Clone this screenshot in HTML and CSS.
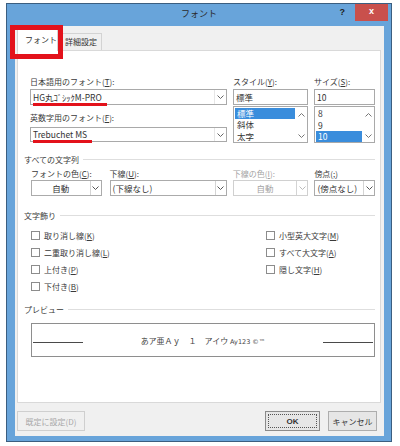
FILE: index.html
```html
<!DOCTYPE html>
<html lang="ja">
<head>
<meta charset="utf-8">
<title>フォント</title>
<link rel="stylesheet" href="styles.css">
</head>
<body>
<div class="window">
  <div class="titlebar">
    <span class="title">フォント</span>
    <div class="controls">
      <span class="help">?</span>
      <span class="close">x</span>
    </div>
  </div>
  <div class="content">
    <div class="tabs">
      <div class="tab active">フォント</div>
      <div class="tab">詳細設定</div>
      <div class="highlight"></div>
    </div>
    <div class="panel">
      <div class="top">
        <div class="col-font">
          <div class="label">日本語用のフォント(<u>T</u>):</div>
          <div class="input tall"><span class="val"><span class="mark">HG丸ｺﾞｼｯｸM-PRO</span></span><span class="drop"><svg width="7" height="4" viewBox="0 0 7 4"><path d="M.5.5 3.5 3.5 6.5.5" fill="none" stroke="#666"/></svg></span></div>
          <div class="label second">英数字用のフォント(<u>F</u>):</div>
          <div class="input short"><span class="val"><span class="mark">Trebuchet MS</span></span><span class="drop"><svg width="7" height="4" viewBox="0 0 7 4"><path d="M.5.5 3.5 3.5 6.5.5" fill="none" stroke="#666"/></svg></span></div>
        </div>
        <div class="col-style">
          <div class="label">スタイル(<u>Y</u>):</div>
          <div class="input tall"><span class="val">標準</span></div>
          <div class="list">
            <div class="items">
              <div class="item sel">標準</div>
              <div class="item">斜体</div>
              <div class="item">太字</div>
            </div>
            <div class="scroll">
              <svg width="7" height="4" viewBox="0 0 7 4"><path d="M.5 3.5 3.5.5 6.5 3.5" fill="none" stroke="#777"/></svg>
              <svg width="7" height="4" viewBox="0 0 7 4"><path d="M.5.5 3.5 3.5 6.5.5" fill="none" stroke="#777"/></svg>
            </div>
          </div>
        </div>
        <div class="col-size">
          <div class="label">サイズ(<u>S</u>):</div>
          <div class="input tall"><span class="val">10</span></div>
          <div class="list">
            <div class="items">
              <div class="item">8</div>
              <div class="item">9</div>
              <div class="item sel short-sel">10</div>
            </div>
            <div class="scroll">
              <svg width="7" height="4" viewBox="0 0 7 4"><path d="M.5 3.5 3.5.5 6.5 3.5" fill="none" stroke="#777"/></svg>
              <svg width="7" height="4" viewBox="0 0 7 4"><path d="M.5.5 3.5 3.5 6.5.5" fill="none" stroke="#777"/></svg>
            </div>
          </div>
        </div>
      </div>

      <div class="group-header first">すべての文字列</div>
      <div class="fields">
        <div class="field f-color">
          <div class="label">フォントの色(<u>C</u>):</div>
          <div class="combo"><span class="cval center">自動</span><span class="cbtn"><svg width="7" height="4" viewBox="0 0 7 4"><path d="M.5.5 3.5 3.5 6.5.5" fill="none" stroke="#555"/></svg></span></div>
        </div>
        <div class="field f-under">
          <div class="label">下線(<u>U</u>):</div>
          <div class="combo"><span class="cval">(下線なし)</span><span class="cbtn"><svg width="7" height="4" viewBox="0 0 7 4"><path d="M.5.5 3.5 3.5 6.5.5" fill="none" stroke="#555"/></svg></span></div>
        </div>
        <div class="field f-ucolor disabled">
          <div class="label">下線の色(<u>I</u>):</div>
          <div class="combo"><span class="cval center">自動</span><span class="cbtn"><svg width="7" height="4" viewBox="0 0 7 4"><path d="M.5.5 3.5 3.5 6.5.5" fill="none" stroke="#bbb"/></svg></span></div>
        </div>
        <div class="field f-emph">
          <div class="label">傍点(<u>;</u>)</div>
          <div class="combo"><span class="cval">(傍点なし)</span><span class="cbtn"><svg width="7" height="4" viewBox="0 0 7 4"><path d="M.5.5 3.5 3.5 6.5.5" fill="none" stroke="#555"/></svg></span></div>
        </div>
      </div>

      <div class="group-header deco">文字飾り</div>
      <div class="checks">
        <label class="check"><span class="box"></span>取り消し線(<u>K</u>)</label>
        <label class="check"><span class="box"></span>小型英大文字(<u>M</u>)</label>
        <label class="check"><span class="box"></span>二重取り消し線(<u>L</u>)</label>
        <label class="check"><span class="box"></span>すべて大文字(<u>A</u>)</label>
        <label class="check"><span class="box"></span>上付き(<u>P</u>)</label>
        <label class="check"><span class="box"></span>隠し文字(<u>H</u>)</label>
        <label class="check"><span class="box"></span>下付き(<u>B</u>)</label>
      </div>

      <div class="group-header prev">プレビュー</div>
      <div class="preview">
        <span class="pline"></span>
        <span class="ptext">あア亜Ａｙ　１　アイウ <span class="latin">Ay123 ©™</span></span>
        <span class="pline"></span>
      </div>
    </div>
    <div class="footer">
      <div class="btn disabled">既定に設定(D)</div>
      <div class="btn ok"><span class="focus">OK</span></div>
      <div class="btn cancel">キャンセル</div>
    </div>
  </div>
</div>
</body>
</html>
```

FILE: styles.css
```css
* { box-sizing: border-box; }
html, body { margin: 0; padding: 0; }
body {
  width: 400px;
  height: 446px;
  overflow: hidden;
  background: #fff;
  font-family: "Noto Sans CJK JP", "Liberation Sans", sans-serif;
  font-size: 8px;
  font-weight: 400;
  color: #3a3a3a;
}
u { text-decoration: underline; text-underline-offset: 1px; }

.window {
  margin: 3px 0 0 6px;
  width: 386px;
  height: 439px;
  border: 1px solid #3b5e80;
  background: #68a4da;
  display: flex;
  flex-direction: column;
}
.titlebar {
  flex: none;
  height: 22px;
  display: grid;
  grid-template-columns: 1fr auto 1fr;
}
.title {
  grid-column: 2;
  align-self: center;
  font-size: 9px;
  line-height: 11px;
  color: #2b2b2b;
  margin-bottom: 4px;
}
.controls {
  grid-column: 3;
  display: flex;
  justify-content: flex-end;
  align-items: flex-start;
}
.help {
  font-family: "Liberation Sans", sans-serif;
  font-size: 9px;
  font-weight: bold;
  color: #1e1e1e;
  line-height: 10px;
  margin: 3px 10px 0 0;
}
.close {
  width: 33px;
  height: 17px;
  margin-right: 3px;
  background: #c9504c;
  color: #fff;
  font-family: "Liberation Sans", sans-serif;
  font-size: 9px;
  font-weight: bold;
  line-height: 15px;
  text-align: center;
}

.content {
  flex: 1;
  margin: 0 7px 5px 8px;
  background: #f0f0f0;
  display: flex;
  flex-direction: column;
}
.tabs {
  flex: none;
  height: 24px;
  display: flex;
  align-items: flex-end;
  padding-left: 2px;
  position: relative;
}
.tab {
  height: 17px;
  padding: 0 4px;
  margin-left: 2px;
  border: 1px solid #d3d3d3;
  border-bottom: none;
  background: #f0f0f0;
  line-height: 16px;
  color: #333;
}
.tab.active {
  margin-left: 0;
  width: 41px;
  height: 23px;
  padding: 5px 0 0 7px;
  line-height: 11px;
  background: #fff;
  margin-bottom: -1px;
  position: relative;
  z-index: 1;
}
.highlight {
  position: absolute;
  left: -5px;
  top: -1px;
  width: 53px;
  height: 34px;
  border: 5px solid #e3121b;
  z-index: 2;
}

.panel {
  flex: none;
  height: 353px;
  margin: 0 3px 0 2px;
  background: #fff;
  border: 1px solid #d9d9d9;
  padding: 0 5px 0 6px;
}
.label { line-height: 11px; white-space: nowrap; color: #3a3a3a; }

.top { display: flex; margin-top: 25px; padding-left: 6px; }
.col-font { width: 198px; margin-right: 6px; }
.col-style { width: 75px; margin-right: 6px; }
.col-size { width: 61px; }
.input {
  display: flex;
  border: 1px solid #a9a9a9;
  background: #fff;
  font-size: 8.5px;
  color: #333;
}
.input.tall { height: 16px; margin-top: 2px; line-height: 14px; }
.input.short { height: 15px; margin-top: 4px; line-height: 13px; }
.label.second { margin-top: 7px; }
.val { flex: 1; padding-left: 2px; white-space: nowrap; }
.mark { border-bottom: 3px solid #e3121b; padding-right: 5px; display: inline-block; line-height: 11px; }
.drop { width: 12px; display: flex; align-items: center; justify-content: center; border-left: 1px solid #e6e6e6; }

.list {
  display: flex;
  height: 37px;
  margin-top: 1px;
  border: 1px solid #a9a9a9;
  font-size: 8.5px;
  color: #333;
}
.items { flex: 1; padding: 1px 0 0 1px; }
.item { height: 11.5px; line-height: 11.5px; padding-left: 2px; }
.item.sel { background: #3a8ddc; color: #fff; width: 60px; height: 11px; line-height: 11px; }
.item.short-sel { width: 46px; }
.scroll {
  width: 12px;
  display: flex;
  flex-direction: column;
  justify-content: space-between;
  align-items: center;
  padding: 6px 0 4px;
}

.group-header {
  display: flex;
  align-items: center;
  line-height: 11px;
  color: #3a3a3a;
}
.group-header::after {
  content: "";
  flex: 1;
  height: 1px;
  background: #dedede;
  margin-left: 4px;
}
.group-header.first { margin-top: 11px; }
.group-header.deco { margin-top: 14px; }
.group-header.prev { margin-top: 9px; }

.fields { display: flex; padding-left: 7px; margin-top: 3px; }
.field .combo { margin-top: 1px; }
.f-color { width: 71px; margin-right: 8px; }
.f-under { width: 118px; margin-right: 6px; }
.f-ucolor { width: 76px; margin-right: 6px; }
.f-emph { width: 61px; }
.combo {
  display: flex;
  height: 16px;
  border: 1px solid #ababab;
  background: #fff;
  font-size: 8.5px;
  line-height: 14px;
  color: #333;
}
.cval { flex: 1; padding-left: 2px; white-space: nowrap; overflow: hidden; }
.cval.center { text-align: center; padding-left: 0; }
.cbtn { width: 11px; border-left: 1px solid #d4d4d4; display: flex; align-items: center; justify-content: center; }
.disabled .label, .disabled .cval { color: #a3a3a3; }
.disabled .combo { border-color: #d0d0d0; }

.checks {
  display: grid;
  grid-template-columns: 235px 1fr;
  grid-auto-rows: 17px;
  padding-left: 7px;
  margin-top: 6px;
}
.check { display: flex; align-items: center; white-space: nowrap; color: #3a3a3a; }
.box {
  width: 9px;
  height: 9px;
  border: 1px solid #8c8c8c;
  background: #fff;
  margin-right: 4px;
}

.preview {
  margin: 8px 0 0 7px;
  height: 34px;
  border: 1px solid #8e8e8e;
  display: flex;
  align-items: center;
  justify-content: space-between;
  padding: 0 1px;
}
.pline { width: 50px; height: 1px; background: #4a4a4a; margin-top: 5px; }
.ptext { font-size: 8px; color: #444; white-space: nowrap; }
.latin { font-family: "DejaVu Sans", sans-serif; font-size: 6.5px; }

.footer {
  flex: 1;
  display: flex;
  align-items: flex-start;
  padding: 8px 7px 0 2px;
}
.btn {
  height: 20px;
  border: 1px solid #adadad;
  background: #e6e6e6;
  display: flex;
  align-items: center;
  justify-content: center;
  color: #333;
  white-space: nowrap;
}
.btn.disabled { width: 68px; color: #a8a8a8; border-color: #cfcfcf; background: #f0f0f0; margin-right: auto; }
.btn.ok { width: 55px; border-color: #8a8a8a; padding: 2px; font-family: "Liberation Sans", sans-serif; font-weight: bold; font-size: 8px; }
.focus { flex: 1; align-self: stretch; border: 1px dotted #555; display: flex; align-items: center; justify-content: center; }
.btn.cancel { width: 49px; margin-left: 8px; }
```
